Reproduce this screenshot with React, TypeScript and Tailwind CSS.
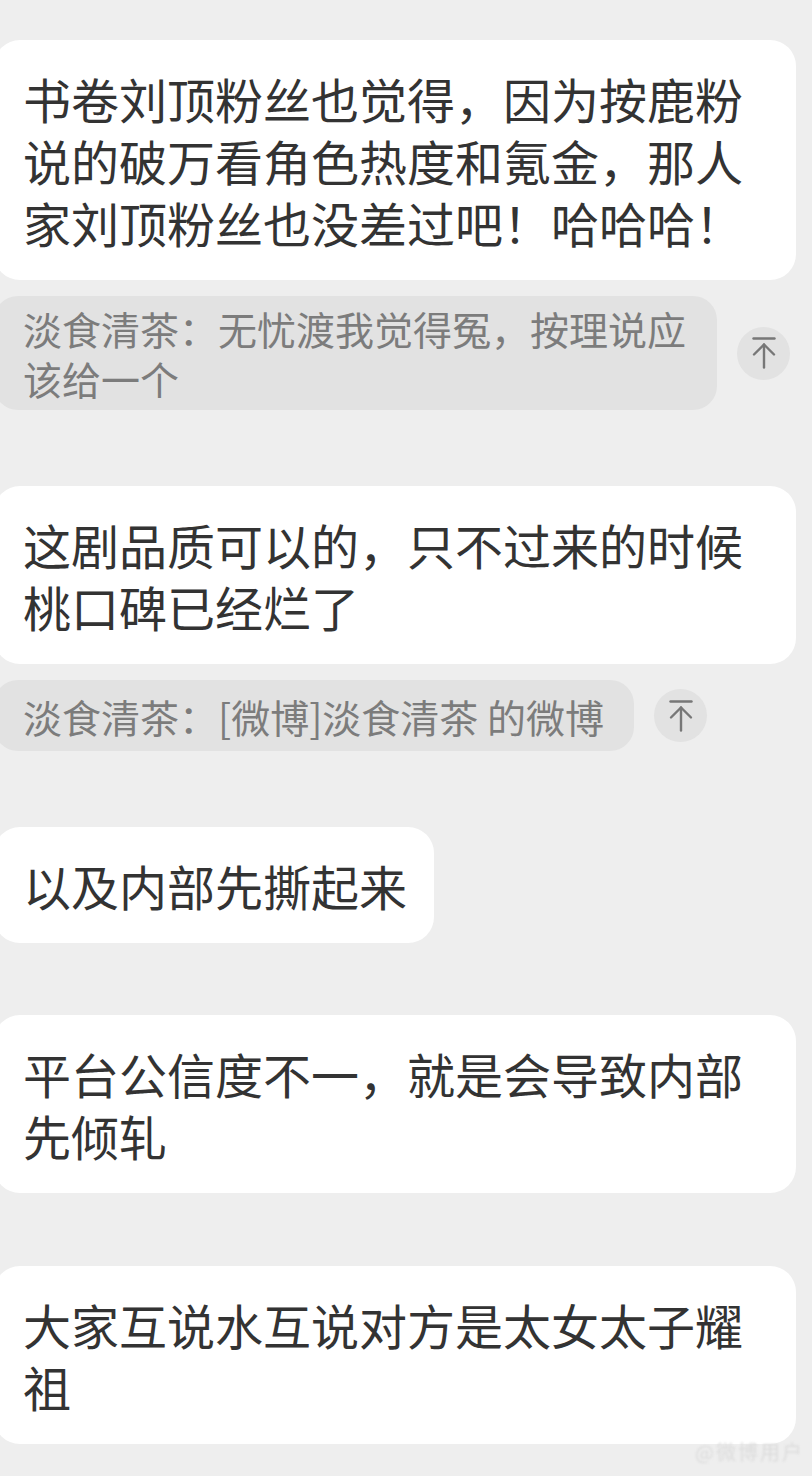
import React from "react";

const font = { fontFamily: '"Noto Sans CJK SC", "Noto Sans", sans-serif' };

function Bubble({ text }: { text: string }) {
  return (
    <div className="ml-[-6px] w-fit max-w-[802px] rounded-[26px] bg-white py-[27px] pl-[29px] pr-[27px] text-[48px] leading-[62px] text-[#333333]">
      {text}
    </div>
  );
}

function TopIcon() {
  return (
    <div className="flex h-[53px] w-[53px] shrink-0 items-center justify-center rounded-full bg-[#e2e2e2]">
      <svg
        width={24}
        height={32}
        viewBox="0 0 24 32"
        fill="none"
        stroke="#777777"
        strokeWidth={2.4}
        strokeLinecap="round"
        strokeLinejoin="round"
      >
        <line x1={1.5} y1={1.5} x2={22.5} y2={1.5} />
        <line x1={12} y1={7.5} x2={12} y2={30.5} />
        <polyline points="2 17.5 12 7.5 22 17.5" />
      </svg>
    </div>
  );
}

function Quote({ text }: { text: string }) {
  return (
    <div className="flex items-center gap-[20px] pr-[22px]">
      <div className="ml-[-6px] flex min-h-[71px] w-fit max-w-[723px] items-center rounded-[24px] bg-[#e2e2e2] py-[7px] pl-[29px] pr-[30px] text-[39px] leading-[50px] text-[#7c7c7c]">
        <span>{text}</span>
      </div>
      <TopIcon />
    </div>
  );
}

export default function App() {
  return (
    <div className="min-h-[1476px] w-[812px] overflow-hidden bg-[#eeeeee] pt-[40px]" style={font}>
      <div className="flex flex-col">
        <Bubble text="书卷刘顶粉丝也觉得，因为按鹿粉说的破万看角色热度和氪金，那人家刘顶粉丝也没差过吧！哈哈哈！" />
        <div className="mt-[16px]">
          <Quote text="淡食清茶：无忧渡我觉得冤，按理说应该给一个" />
        </div>
        <div className="mt-[76px]">
          <Bubble text="这剧品质可以的，只不过来的时候桃口碑已经烂了" />
        </div>
        <div className="mt-[16px]">
          <Quote text="淡食清茶：[微博]淡食清茶 的微博" />
        </div>
        <div className="mt-[76px]">
          <Bubble text="以及内部先撕起来" />
        </div>
        <div className="mt-[72px]">
          <Bubble text="平台公信度不一，就是会导致内部先倾轧" />
        </div>
        <div className="mt-[73px]">
          <Bubble text="大家互说水互说对方是太女太子耀祖" />
        </div>
        <div className="mt-[-4px] flex justify-end pr-[8px]">
          <span className="text-[20px] leading-[24px] tracking-[2px] text-[#dcdcdc] blur-[1px]">
            @微博用户
          </span>
        </div>
      </div>
    </div>
  );
}
